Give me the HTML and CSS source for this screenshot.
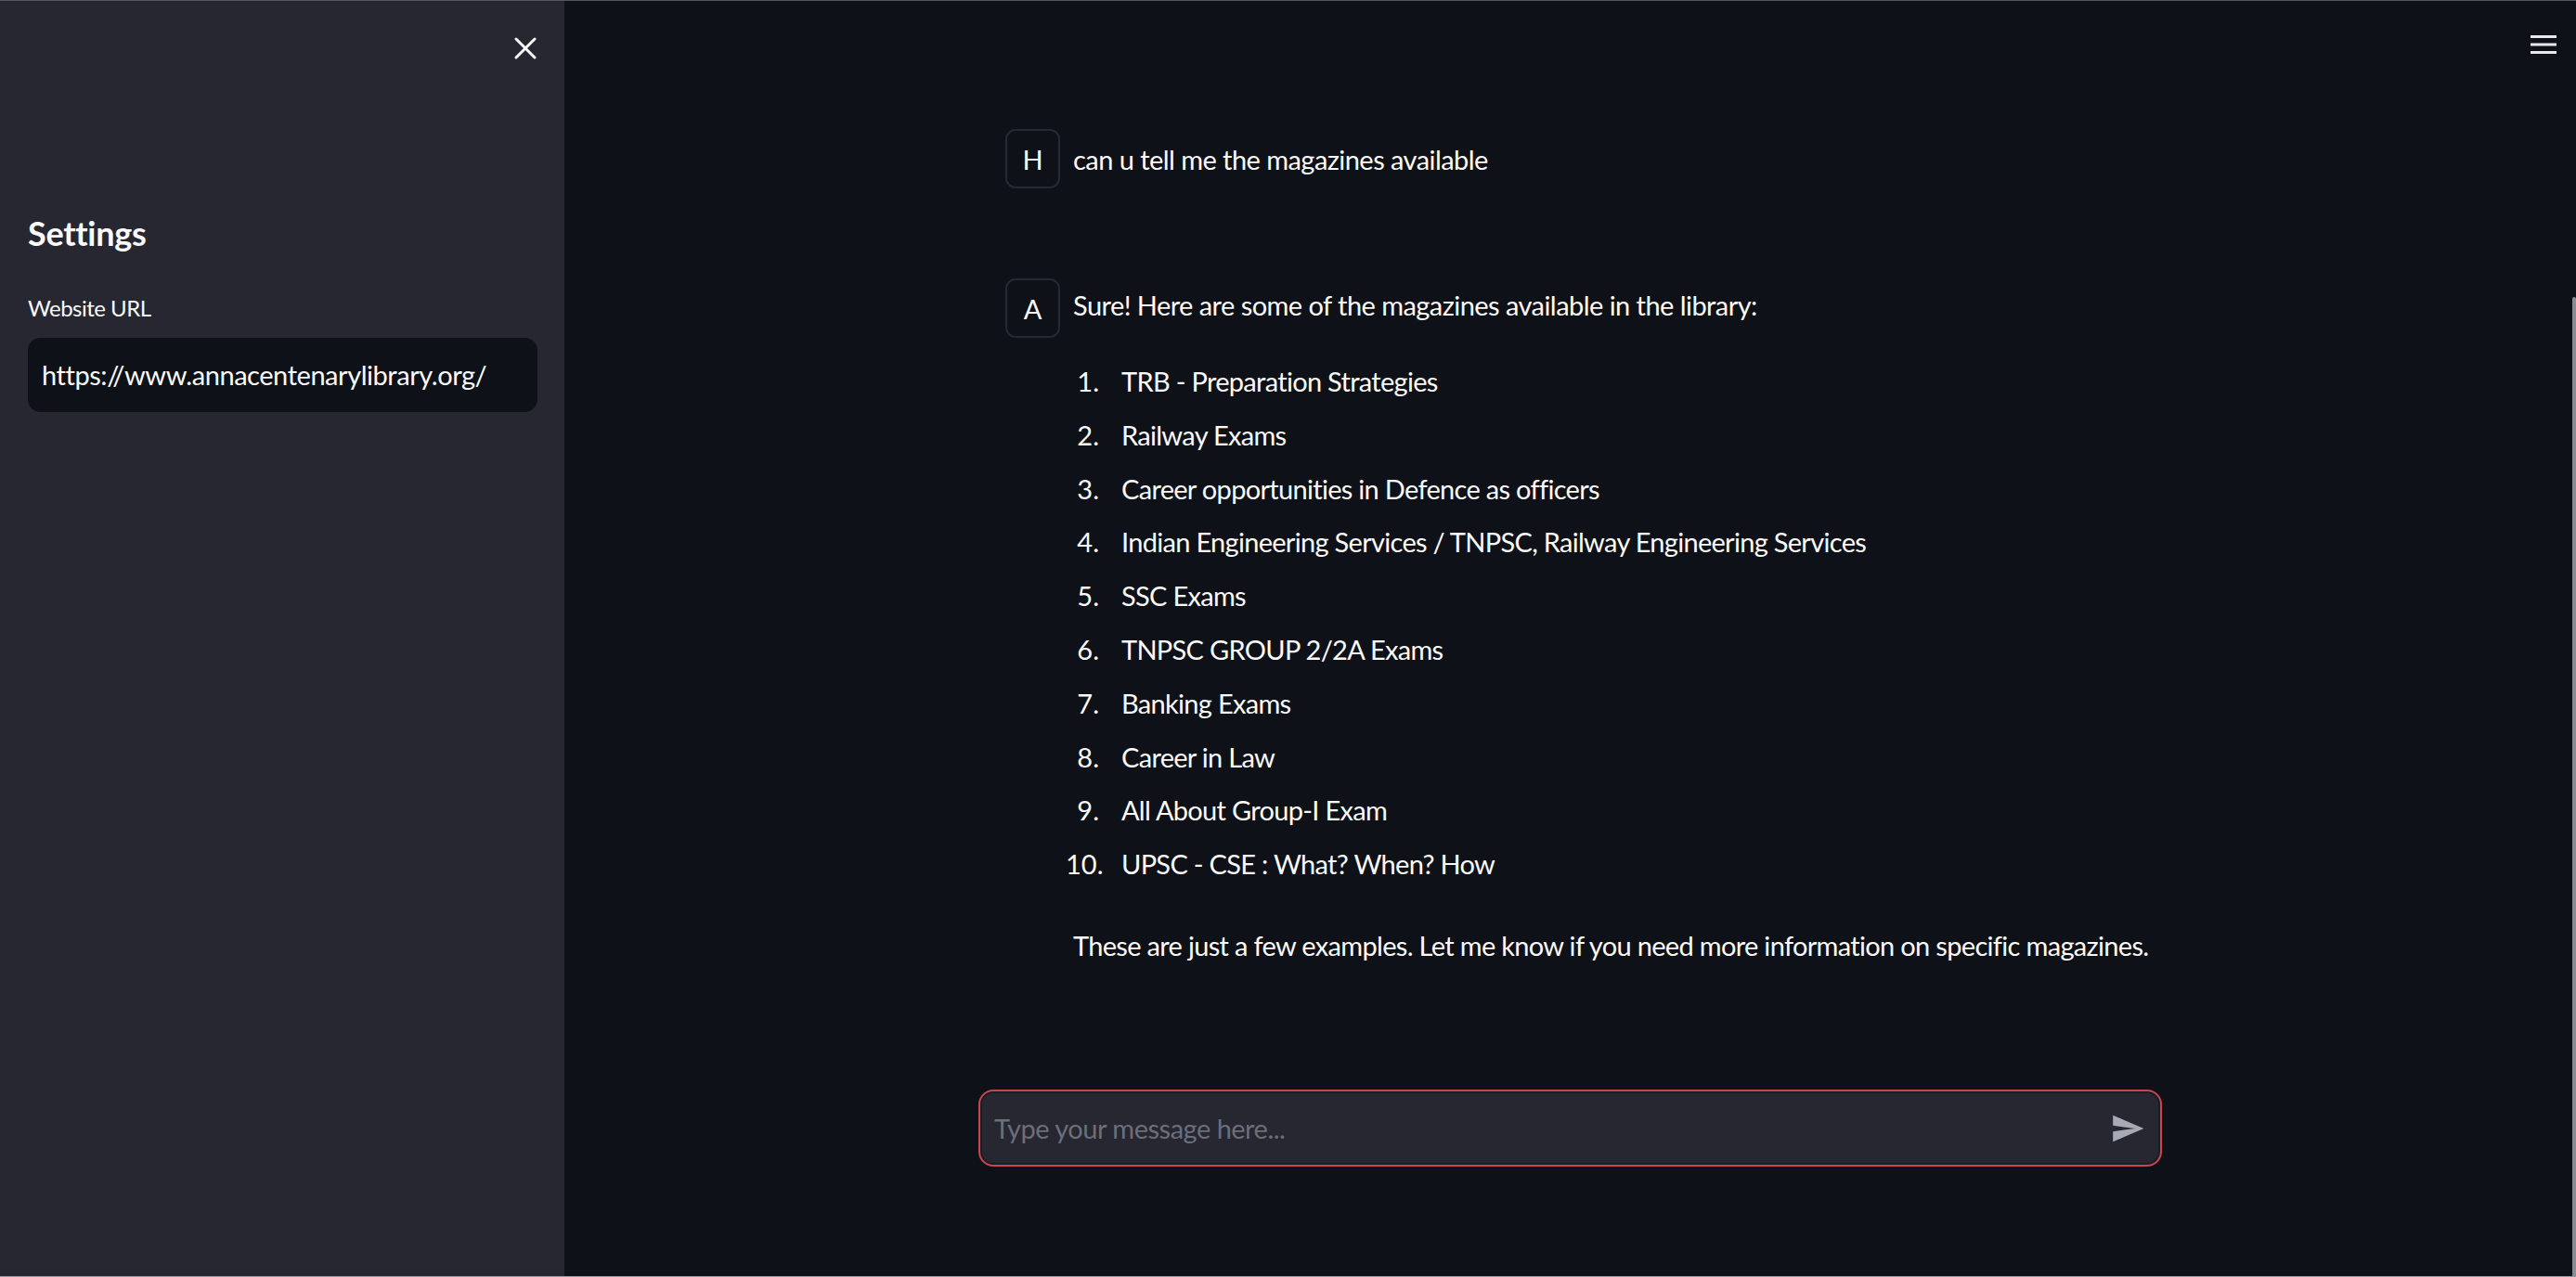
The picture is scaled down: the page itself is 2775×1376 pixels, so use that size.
FILE: index.html
```html
<!DOCTYPE html>
<html lang="en">
<head>
<meta charset="utf-8">
<title>Chat</title>
<link rel="stylesheet" href="styles.css">
</head>
<body>
<div class="app">
  <aside class="sidebar">
    <div class="sb-head">
      <button class="icon-btn close-btn" aria-label="Close sidebar">
        <svg width="24" height="24" viewBox="0 0 24 24"><path d="M2 2 L22 22 M22 2 L2 22" stroke="#fafafa" stroke-width="3" stroke-linecap="round"/></svg>
      </button>
    </div>
    <h2 class="sb-title">Settings</h2>
    <div class="sb-label">Website URL</div>
    <div class="sb-input">https://www.annacentenarylibrary.org/</div>
  </aside>
  <main class="main">
    <button class="icon-btn menu-btn" aria-label="Menu">
      <svg width="30" height="22" viewBox="0 0 30 22"><path d="M1 2.5 H29 M1 11 H29 M1 19.5 H29" stroke="#e8e8ea" stroke-width="3.2"/></svg>
    </button>
    <div class="chat">
      <div class="msg msg-human">
        <div class="avatar">H</div>
        <div class="msg-body"><p class="line-single">can u tell me the magazines available</p></div>
      </div>
      <div class="msg msg-ai">
        <div class="avatar">A</div>
        <div class="msg-body">
          <p class="para first">Sure! Here are some of the magazines available in the library:</p>
          <ol class="list">
            <li>TRB - Preparation Strategies</li>
            <li>Railway Exams</li>
            <li>Career opportunities in Defence as officers</li>
            <li>Indian Engineering Services / TNPSC, Railway Engineering Services</li>
            <li>SSC Exams</li>
            <li>TNPSC GROUP 2/2A Exams</li>
            <li>Banking Exams</li>
            <li>Career in Law</li>
            <li>All About Group-I Exam</li>
            <li>UPSC - CSE : What? When? How</li>
          </ol>
          <p class="para last">These are just a few examples. Let me know if you need more information on specific magazines.</p>
        </div>
      </div>
    </div>
    <div class="composer">
      <div class="input-box">
        <span class="placeholder">Type your message here...</span>
        <svg class="send" width="38" height="38" viewBox="0 0 24 24"><path d="M2.01 21L23 12 2.01 3 2 10l15 2-15 2z" fill="#a6a9b6"/></svg>
      </div>
    </div>
    <div class="scrollbar"></div>
  </main>
</div>
</body>
</html>
```
FILE: styles.css
```css
* { box-sizing: border-box; }
html, body {
  margin: 0;
  padding: 0;
  width: 2775px;
  height: 1376px;
  overflow: hidden;
  background: #0e1117;
  font-family: Lato, "Noto Sans", sans-serif;
  color: #fafafa;
}
.app {
  display: flex;
  height: 1376px;
  border-top: 1px solid #55565d;
  border-bottom: 1px solid #9a9ba2;
}
.sidebar {
  width: 608px;
  flex: none;
  background: #262730;
  padding: 0 29px 0 30px;
  display: flex;
  flex-direction: column;
}
.sb-head {
  height: 101px;
  display: flex;
  justify-content: flex-end;
  align-items: center;
  margin-right: -29px;
  padding-right: 30px;
}
.icon-btn {
  background: none;
  border: 0;
  padding: 0;
  margin: 0;
  display: flex;
  cursor: pointer;
}
.close-btn svg { display: block; }
.sb-title {
  margin: 128px 0 0 0;
  font-size: 36px;
  font-weight: 700;
  line-height: 43px;
  letter-spacing: -0.3px;
}
.sb-label {
  margin-top: 44px;
  font-size: 24px;
  line-height: 29px;
  letter-spacing: -0.5px;
}
.sb-input {
  margin-top: 18px;
  height: 80px;
  line-height: 80px;
  background: #0e1117;
  border-radius: 14px;
  padding-left: 15px;
  font-size: 29px;
  letter-spacing: -0.45px;
  white-space: nowrap;
}
.main {
  flex: 1;
  position: relative;
  display: flex;
  flex-direction: column;
  background: #0e1117;
}
.menu-btn {
  position: absolute;
  top: 36px;
  right: 20px;
}
.chat {
  flex: 1;
  width: 1275px;
  margin: 0 auto;
  padding: 138px 0 0 29px;
}
.msg {
  display: flex;
  align-items: flex-start;
  gap: 14px;
}
.msg-ai { margin-top: 95px; }
.avatar {
  flex: none;
  width: 59px;
  height: 64px;
  border: 2px solid #262932;
  border-radius: 11px;
  display: flex;
  align-items: center;
  justify-content: center;
  font-size: 29px;
  line-height: 1;
  background: #0e1117;
}
.msg-body {
  font-size: 29px;
  letter-spacing: -0.55px;
}
.msg-body p { margin: 0; }
.line-single { line-height: 66px; }
.para { line-height: 48px; }
.para.first { padding-top: 5px; }
.para.last { letter-spacing: -0.68px; }
.list {
  margin: 29px 0 35px 0;
  padding: 0 0 0 52px;
  list-style: none;
  counter-reset: item;
}
.list li {
  counter-increment: item;
  display: flex;
  line-height: 57.8px;
  letter-spacing: -0.7px;
}
.list li::before {
  content: counter(item) ".";
  width: 36px;
  margin-left: -60px;
  margin-right: 24px;
  text-align: right;
  flex: none;
  letter-spacing: 0;
}
.composer {
  padding-bottom: 118px;
  display: flex;
  justify-content: center;
}
.input-box {
  width: 1275px;
  height: 83px;
  border: 2px solid #c8474d;
  border-radius: 16px;
  background: #262730;
  box-shadow: inset 0 0 0 2px #1a1d26;
  display: flex;
  align-items: center;
  justify-content: space-between;
  padding: 0 16px 0 15px;
}
.placeholder {
  font-size: 29px;
  letter-spacing: -0.5px;
  color: #6b6e7b;
}
.send { display: block; }
.scrollbar {
  position: absolute;
  right: 0;
  top: 319px;
  bottom: 0;
  width: 4px;
  background: #8a8c93;
  border-radius: 3px 3px 0 0;
}
```
